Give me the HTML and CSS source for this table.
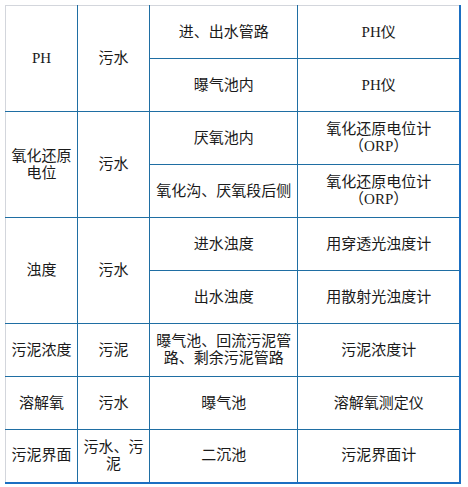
FILE: index.html
```html
<!DOCTYPE html>
<html lang="zh-CN">
<head>
<meta charset="utf-8">
<title>监测仪表</title>
<link rel="stylesheet" href="styles.css">
</head>
<body>
<table class="grid">
  <colgroup>
    <col class="c1"><col class="c2"><col class="c3"><col class="c4">
  </colgroup>
  <tbody>
    <tr class="first">
      <td rowspan="2">PH</td>
      <td rowspan="2">污水</td>
      <td>进、出水管路</td>
      <td>PH仪</td>
    </tr>
    <tr>
      <td>曝气池内</td>
      <td>PH仪</td>
    </tr>
    <tr>
      <td rowspan="2">氧化还原电位</td>
      <td rowspan="2">污水</td>
      <td>厌氧池内</td>
      <td>氧化还原电位计（ORP）</td>
    </tr>
    <tr>
      <td>氧化沟、厌氧段后侧</td>
      <td>氧化还原电位计（ORP）</td>
    </tr>
    <tr>
      <td rowspan="2">浊度</td>
      <td rowspan="2">污水</td>
      <td>进水浊度</td>
      <td>用穿透光浊度计</td>
    </tr>
    <tr>
      <td>出水浊度</td>
      <td>用散射光浊度计</td>
    </tr>
    <tr>
      <td>污泥浓度</td>
      <td>污泥</td>
      <td>曝气池、回流污泥管路、剩余污泥管路</td>
      <td>污泥浓度计</td>
    </tr>
    <tr>
      <td>溶解氧</td>
      <td>污水</td>
      <td>曝气池</td>
      <td>溶解氧测定仪</td>
    </tr>
    <tr class="last">
      <td>污泥界面</td>
      <td>污水、污泥</td>
      <td>二沉池</td>
      <td>污泥界面计</td>
    </tr>
  </tbody>
</table>
</body>
</html>
```
FILE: styles.css
```css
html, body {
  margin: 0;
  padding: 0;
  background: #ffffff;
}
body {
  padding: 5px;
}
.grid {
  border-collapse: collapse;
  table-layout: fixed;
  width: 456px;
  font-family: "Liberation Serif", "Noto Sans CJK SC", serif;
  font-size: 15px;
  line-height: 17px;
  color: #1a1a1a;
  border-top: 1px solid #d3d6dc;
  border-left: 1px solid #d3d6dc;
  border-right: 2px solid #1b6fc2;
  border-bottom: 2px solid #1b6fc2;
}
.c1 { width: 72px; }
.c2 { width: 72px; }
.c3 { width: 148px; }
.c4 { width: 162px; }
.grid td {
  border: 1px solid #1f6ea3;
  text-align: center;
  vertical-align: middle;
  padding: 0 5px;
  height: 53px;
  box-sizing: border-box;
}
.grid tr.first td {
  border-top: 1px solid #d3d6dc;
}
.grid tr td:first-child {
  border-left: 1px solid #d3d6dc;
}
.grid tr.last td {
  border-bottom: 2px solid #1b6fc2;
}
.grid tr td:last-child {
  border-right: 2px solid #1b6fc2;
}
```
